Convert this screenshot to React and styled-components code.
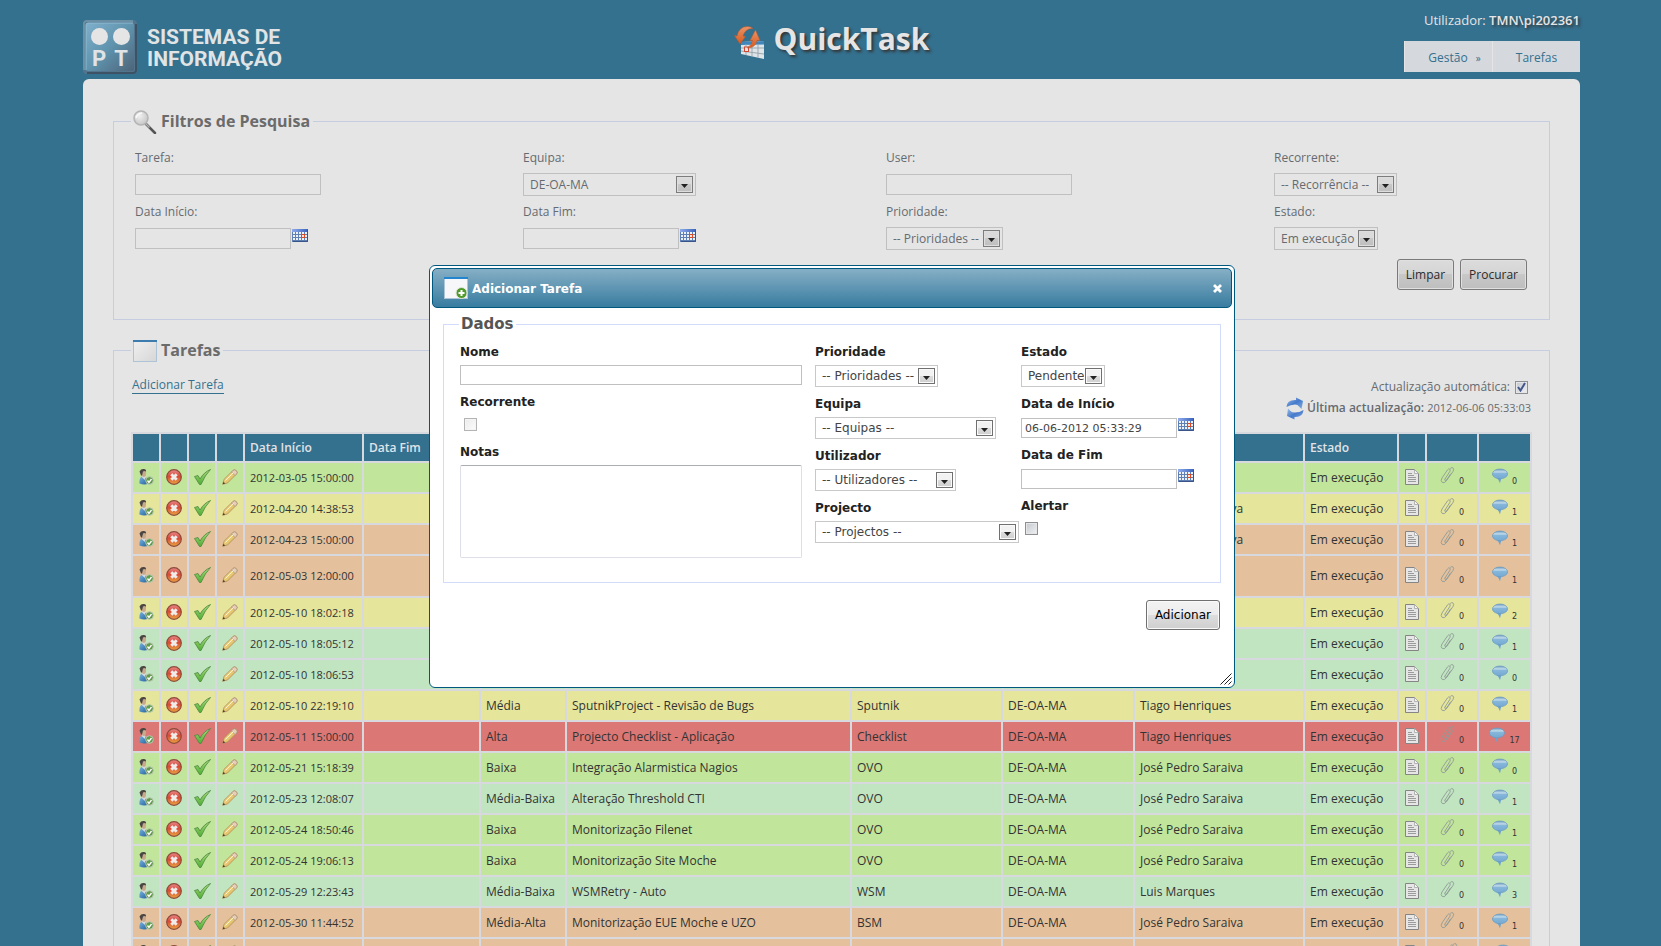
import React from "react";
import styled, { createGlobalStyle, css } from "styled-components";

const pageFont = `"Trebuchet MS", "Open Sans", "Noto Sans", sans-serif`;
const dialogFont = `Verdana, "DejaVu Sans", sans-serif`;

const GlobalStyle = createGlobalStyle`
  *, *::before, *::after { box-sizing: border-box; }
  body {
    margin: 0;
    background: #34718f;
    color: #666b70;
    font: 12px/18px ${pageFont};
  }
  button, input, select, textarea { font: inherit; color: inherit; margin: 0; }
`;

/* ---------- Page frame ---------- */

const Page = styled.div`
  height: 100vh;
  overflow: hidden;
  padding: 0 81px 0 83px;
`;

const Header = styled.header`
  display: grid;
  grid-template-columns: 1fr auto 1fr;
  height: 79px;
`;

const Brand = styled.div`
  display: flex;
  align-items: flex-start;
  gap: 10px;
  padding-top: 20px;
`;

const BrandName = styled.div`
  padding-top: 6px;
  color: #e0e4e5;
  font: bold 21px/22px Roboto, "Open Sans", sans-serif;
`;

const Title = styled.h1`
  display: flex;
  align-items: flex-start;
  gap: 10px;
  margin: 0;
  padding-top: 18px;
  color: #e5e5e5;
  font: bold 30px/42px ${pageFont};
  text-shadow: 2px 2px 3px #333;

  svg { margin-top: 8px; }
`;

const UserArea = styled.div`
  display: flex;
  flex-direction: column;
  align-items: flex-end;
  padding-top: 11px;
`;

const UserLine = styled.div`
  color: #e5e5e5;
  font-size: 13px;
  line-height: 18px;
  margin-bottom: 12px;

  strong { font-weight: 600; text-shadow: 2px 2px 3px #333; }
`;

const Menu = styled.nav`
  display: flex;
  height: 31px;
  background: #d5d8dd;
`;

const MenuItem = styled.a`
  display: flex;
  align-items: center;
  justify-content: center;
  gap: 8px;
  width: 88px;
  padding-top: 2px;
  padding-left: ${(p) => (p.$nested ? 12 : 0)}px;
  border-left: 1px solid #e5e5e5;
  color: #34718f;
  text-decoration: none;

  small { font-size: 10px; }
`;

const Panel = styled.main`
  min-height: 100vh;
  padding: 30px;
  background: #e5e5e5;
  border-radius: 6px 6px 0 0;
`;

const Group = styled.fieldset`
  min-width: 0;
  margin: 0 0 18px;
  padding: 0 17px;
  border: 1px solid #c6cde0;
`;

const GroupTitle = styled.legend`
  display: flex;
  align-items: center;
  gap: 4px;
  height: 25px;
  padding: 0 3px 0 2px;
  color: #6b6b6b;
  font-size: 16px;
  font-weight: bold;
  line-height: 20px;

  span { padding-bottom: 2px; }
`;

/* ---------- Form controls ---------- */

const Field = styled.div`
  display: flex;
  flex-direction: column;
  align-items: flex-start;
`;

const ControlRow = styled.div`
  display: flex;
  align-items: center;
  gap: 1px;
  height: 23px;
`;

const textBox = css`
  border: 1px solid #c0c0c0;
  border-radius: 0;
  background: transparent;
  outline: 0;
`;

const TextInput = styled.input`
  ${textBox}
  width: ${(p) => p.$width};
  height: ${(p) => (p.$dialog ? 20 : 21)}px;
  padding: 0 3px;
  font-size: ${(p) => (p.$dialog ? 11 : 12)}px;
`;

const SelectFrame = styled.div`
  position: relative;
  width: ${(p) => p.$width}px;
  height: ${(p) => (p.$dialog ? 22 : 23)}px;

  select {
    ${textBox}
    appearance: none;
    width: 100%;
    height: 100%;
    padding: 0 20px 0 6px;
    border-color: ${(p) => (p.$dialog ? "#c8c8c8" : "#c0c0c0")};
  }
`;

const SelectArrow = styled.span`
  position: absolute;
  top: 3px;
  right: 3px;
  bottom: 3px;
  display: flex;
  align-items: center;
  justify-content: center;
  width: 17px;
  padding-top: 2px;
  border: 1px solid ${(p) => (p.$dialog ? "#707070" : "#7c7c7c")};
  background: ${(p) =>
    p.$dialog
      ? "linear-gradient(#f2f2f2 50%, #dcdcdc 50%, #cfcfcf)"
      : "linear-gradient(#dadada 50%, #c8c8c8 50%, #bebebe)"};
  box-shadow: inset 0 0 0 1px ${(p) => (p.$dialog ? "#fafafa" : "#dedede")};
  pointer-events: none;
`;

const CalendarButton = styled.button`
  align-self: flex-start;
  width: 16px;
  height: 13px;
  margin-top: ${(p) => (p.$dialog ? 0 : 2)}px;
  padding: 0;
  border: 0;
  background: none;

  svg { display: block; }
`;

const CheckFrame = styled.span`
  position: relative;
  display: inline-flex;
  width: 13px;
  height: 13px;

  input {
    appearance: none;
    width: 13px;
    height: 13px;
    border: 1px solid ${(p) => (p.$faded ? "#b4b4b4" : "#8c8f93")};
    background: ${(p) =>
      p.$faded
        ? "linear-gradient(135deg, #ebebeb, #fcfcfc)"
        : "linear-gradient(135deg, #c3c8ce, #f0f1f3)"};
    box-shadow: inset 0 0 0 1px ${(p) => (p.$faded ? "#f4f4f4" : "#e6e6e6")};
  }
  svg {
    position: absolute;
    top: 1px;
    left: 2px;
    pointer-events: none;
  }
`;

const PushButton = styled.button`
  height: ${(p) => (p.$dialog ? 30 : 31)}px;
  padding: 0 8px;
  border: 1px solid ${(p) => (p.$dialog ? "#707070" : "#7a7a7a")};
  border-radius: 3px;
  background: ${(p) =>
    p.$dialog
      ? "linear-gradient(#f3f3f3, #ebebeb 50%, #dddddd 50%, #cfcfcf)"
      : "linear-gradient(#dcdcdc, #d4d4d4 50%, #c8c8c8 50%, #bebebe)"};
  box-shadow: inset 0 0 0 1px ${(p) => (p.$dialog ? "#fafafa" : "#e0e0e0")};
  color: ${(p) => (p.$dialog ? "#000" : "#2b2b2b")};
`;

/* ---------- Search filters ---------- */

const Filters = styled.div`
  display: grid;
  grid-template-columns: 388fr 363fr 388fr 254fr;
  row-gap: 7px;
  padding: 15px 4px 0;

  label { margin-bottom: 6px; }
`;

const FilterActions = styled.div`
  display: flex;
  justify-content: flex-end;
  gap: 6px;
  padding: 9px 5px 29px;
`;

/* ---------- Task list ---------- */

const ListBar = styled.div`
  display: flex;
  justify-content: space-between;
  padding: 14px 1px 13px;
`;

const AddLink = styled.a`
  align-self: flex-start;
  border-bottom: 1px solid #34718f;
  color: #34718f;
  line-height: 16px;
  text-decoration: none;
`;

const RefreshInfo = styled.div`
  display: flex;
  flex-direction: column;
  align-items: flex-end;
`;

const AutoRefresh = styled.label`
  display: flex;
  align-items: center;
  gap: 5px;
  height: 20px;
  padding-right: 3px;
`;

const LastRefresh = styled.div`
  display: flex;
  align-items: center;
  gap: 3px;
  height: 22px;

  strong { font-weight: 600; }
  time { font-size: 11px; }
`;

const IconButton = styled.button`
  display: inline-flex;
  padding: 0;
  border: 0;
  background: none;
  vertical-align: middle;
`;

const TaskTable = styled.table`
  width: 100%;
  table-layout: fixed;
  border-collapse: separate;
  border-spacing: 2px;
  background: #d8d9de;
  color: #333;

  th {
    height: 27px;
    padding: 0 5px;
    background: #34718f;
    color: #e0e4e8;
    font-weight: 600;
    text-align: left;
  }
  td { padding: 0 5px; }
`;

const rowColors = {
  green: "#c1e59b",
  yellow: "#e5e59b",
  orange: "#e4c19c",
  mint: "#c1e5c1",
  red: "#db7875",
};

const TaskRow = styled.tr`
  height: ${(p) => (p.$tall ? 40 : 29)}px;

  td { background: ${(p) => rowColors[p.$tone]}; }
`;

const IconCell = styled.td`
  && { padding: 0 0 3px; text-align: center; }
  svg { display: inline-block; vertical-align: middle; }
`;

const DateCell = styled.td`
  font-size: 11px;
`;

const Count = styled.sub`
  padding-left: 4px;
  font-size: 8px;
  line-height: 8px;
  vertical-align: -5px;
  font-family: "DejaVu Sans", sans-serif;
`;

/* ---------- Dialog ---------- */

const DialogLayer = styled.div`
  position: fixed;
  inset: 0;
  display: flex;
  align-items: flex-start;
  justify-content: center;
  padding: 265px 0 0 3px;
`;

const Dialog = styled.section`
  position: relative;
  width: 806px;
  max-width: 100%;
  padding: 2px;
  border: 1px solid #00587f;
  border-radius: 6px;
  background: #fff;
  color: #222;
  font: 12px/18px ${dialogFont};
`;

const DialogHeader = styled.div`
  display: flex;
  align-items: center;
  gap: 4px;
  height: 40px;
  padding: 0 9px 0 11px;
  border: 1px solid #00587f;
  border-radius: 5px;
  background: linear-gradient(#86afc5, #387ca0);
  color: #fff;

  h2 { flex: 1; margin: 0; font-size: 12px; padding-top: 2px; }
`;

const DialogBody = styled.form`
  padding: 5px 11px 55px;
`;

const DialogGroup = styled.fieldset`
  margin: 0;
  padding: 0 15px 24px;
  border: 1px solid #d0dcfa;
`;

const DialogGroupTitle = styled.legend`
  height: 23px;
  padding: 0 2px;
  color: #555;
  font-size: 15px;
  font-weight: bold;
  line-height: 23px;
`;

const DialogColumns = styled.div`
  display: grid;
  grid-template-columns: 355px 206px 1fr;
  padding: 7px 1px 0;
`;

const DialogColumn = styled.div`
  display: flex;
  flex-direction: column;
  gap: 8px;
`;

const DialogField = styled(Field)`
  > label { margin-bottom: 4px; font-weight: bold; }
  select, input { color: #444; }
`;

const DialogRow = styled.div`
  display: flex;
  align-items: center;
  gap: 1px;
  height: ${(p) => p.$height}px;
  padding: ${(p) => (p.$date ? "1px 0 0" : p.$check ? "0 0 2px 4px" : 0)};
`;

const Notes = styled.textarea`
  width: 342px;
  height: 93px;
  padding: 4px;
  border: 1px solid #dedfe6;
  border-top-color: #abadb3;
  border-radius: 2px;
  outline: 0;
  resize: none;
`;

const DialogActions = styled.div`
  display: flex;
  justify-content: flex-end;
  padding: 17px 1px 0;
`;

const ResizeGrip = styled.svg`
  position: absolute;
  right: 2px;
  bottom: 2px;
`;

/* ---------- Icons ---------- */

const HiddenSvg = styled.svg`
  position: absolute;
  width: 0;
  height: 0;
`;

const IconDefs = () => (
  <HiddenSvg aria-hidden="true">
    <defs>
      <linearGradient id="gLogo" x1="0" y1="0" x2="1" y2="1">
        <stop offset="0" stopColor="#7fb0cb" />
        <stop offset=".5" stopColor="#5f93ae" />
        <stop offset="1" stopColor="#4d6478" />
      </linearGradient>
      <linearGradient id="gRed" x1="0" y1="0" x2="0" y2="1">
        <stop offset="0" stopColor="#e8898a" />
        <stop offset=".45" stopColor="#d84836" />
        <stop offset="1" stopColor="#e8a441" />
      </linearGradient>
      <linearGradient id="gTick" x1="0" y1="0" x2="0" y2="1">
        <stop offset="0" stopColor="#a9dc7c" />
        <stop offset="1" stopColor="#4fae33" />
      </linearGradient>
      <linearGradient id="gPencil" x1="0" y1="0" x2="1" y2="1">
        <stop offset="0" stopColor="#f6e9a4" />
        <stop offset="1" stopColor="#d9a846" />
      </linearGradient>
      <linearGradient id="gBody" x1="0" y1="0" x2="1" y2="1">
        <stop offset="0" stopColor="#7bb4dd" />
        <stop offset="1" stopColor="#1f5f9c" />
      </linearGradient>
      <linearGradient id="gBubble" x1="0" y1="0" x2="0" y2="1">
        <stop offset="0" stopColor="#6f9dc2" />
        <stop offset=".3" stopColor="#c2dbea" />
        <stop offset=".45" stopColor="#86b6da" />
        <stop offset="1" stopColor="#74aad4" />
      </linearGradient>
      <linearGradient id="gPaper" x1="0" y1="0" x2="1" y2="1">
        <stop offset="0" stopColor="#f0f0f0" />
        <stop offset="1" stopColor="#d6d6d6" />
      </linearGradient>
      <linearGradient id="gCalHead" x1="0" y1="0" x2="1" y2="0">
        <stop offset="0" stopColor="#8fabec" />
        <stop offset="1" stopColor="#3a62bd" />
      </linearGradient>
      <linearGradient id="gSync" x1="0" y1="0" x2="1" y2="1">
        <stop offset="0" stopColor="#9cbfe8" />
        <stop offset=".5" stopColor="#4579cb" />
        <stop offset="1" stopColor="#84aee2" />
      </linearGradient>
      <linearGradient id="gOrange" x1="0" y1="0" x2="0" y2="1">
        <stop offset="0" stopColor="#eb9468" />
        <stop offset="1" stopColor="#d65a1e" />
      </linearGradient>
      <radialGradient id="gLens" cx=".4" cy=".35" r=".7">
        <stop offset="0" stopColor="#f0f0f0" />
        <stop offset="1" stopColor="#c4c4c4" />
      </radialGradient>
    </defs>
  </HiddenSvg>
);

const LogoIcon = () => (
  <svg width="54" height="54" viewBox="0 0 54 54" aria-hidden="true">
    <rect width="54" height="54" rx="4" fill="#52758d" />
    <path d="M1 50V4q0-3 3-3h46" fill="none" stroke="#6b8fa5" strokeWidth="2" />
    <path d="M53 4v46q0 3-3 3H4" fill="none" stroke="#3d5265" strokeWidth="2" />
    <rect x="3" y="3" width="48" height="48" rx="2" fill="url(#gLogo)" />
    <path d="M3 50V5q0-2 2-2h45" fill="none" stroke="#8fbbd1" />
    <circle cx="16.500" cy="16.500" r="8.500" fill="#e5e5e5" />
    <circle cx="38.500" cy="16.500" r="8.500" fill="#e5e5e5" />
    <g fill="#e0e3e5" fontFamily="Roboto, sans-serif" fontWeight="bold" fontSize="22" textAnchor="middle">
      <text x="16" y="46">P</text>
      <text x="38" y="46">T</text>
    </g>
  </svg>
);

const QuickTaskIcon = () => (
  <svg width="30" height="34" viewBox="0 0 30 34" aria-hidden="true">
    <path d="M7 16l23-1v18L7 28z" fill="#dfe4e7" />
    <path d="M7 16l23-1v3.500L7 19z" fill="#3f86bd" />
    <path d="M7 22h23M7 25l23 3M12 18v11M18 18v12.500M24 18v13.500" stroke="#93a2ac" strokeWidth=".9" fill="none" />
    <rect x="10.500" y="21" width="4" height="4.500" fill="#f3e6e2" stroke="#cf4a35" />
    <path d="M3 10Q5 .5 13.500.5q3.500 0 5.500 2-7.500-.5-10 7.500l2.500.5L6 18 .5 9.500z" fill="url(#gOrange)" stroke="#b9572c" strokeWidth=".5" />
    <path d="M21.500 4L26 14.500h-3Q21.500 22 13 22q5-3 5.500-7.500H16z" fill="url(#gOrange)" stroke="#b9572c" strokeWidth=".5" />
  </svg>
);

const SearchIcon = () => (
  <svg width="24" height="24" viewBox="0 0 24 24" aria-hidden="true">
    <path d="M13 14l9 9" stroke="#555" strokeWidth="2.500" strokeLinecap="round" />
    <path d="M12.500 13.500l4 4" stroke="#b5b5b5" strokeWidth="1.500" />
    <circle cx="8" cy="8" r="7" fill="url(#gLens)" stroke="#b4b4b4" strokeWidth="1.500" />
    <path d="M3 8q1-4 6-5" stroke="#fafafa" strokeWidth="1.500" fill="none" />
  </svg>
);

const WindowIcon = ({ add }) => (
  <svg width="24" height="22" viewBox="0 0 24 22" aria-hidden="true">
    <rect x=".5" y=".5" width="23" height="21" fill={add ? "#f7f7f9" : "url(#gPaper)"} stroke="#adc4d8" />
    <rect width="24" height="2" fill={add ? "#2485cf" : "#3c7cae"} />
    {add && (
      <g>
        <circle cx="17.500" cy="16" r="5.500" fill="#4f9a2b" stroke="#dfe8d8" />
        <path d="M17.500 13v6M14.500 16h6" stroke="#fff" strokeWidth="2" />
      </g>
    )}
  </svg>
);

const CalendarIcon = () => (
  <svg width="16" height="13" viewBox="0 0 16 13" aria-hidden="true">
    <rect width="16" height="13" fill="#5f80b5" />
    <rect width="16" height="3" fill="url(#gCalHead)" />
    <g fill="#edf1f8">
      {[3, 6, 9].map((y) => [1, 4, 7, 10, 13].map((x) => <rect key={`${x}-${y}`} x={x} y={y} width="2" height="2" />))}
    </g>
    <rect x="9.500" y="5.500" width="3" height="3" fill="#f6e6e0" stroke="#dd4b24" />
    <path d="M15.500 1v11.500H1" stroke="#3b5488" fill="none" />
  </svg>
);

const TickMark = () => (
  <svg width="9" height="10" viewBox="0 0 9 10" aria-hidden="true">
    <path d="M1 5l2.500 3.500L8 1" fill="none" stroke="#43568c" strokeWidth="2" />
  </svg>
);

const ArrowGlyph = () => (
  <svg width="7" height="5" viewBox="0 0 7 5" aria-hidden="true">
    <path d="M0 1h7L3.500 5z" fill="#222" />
  </svg>
);

const SyncIcon = () => (
  <svg width="18" height="23" viewBox="0 0 18 23" aria-hidden="true">
    <path d="M.5 10Q1 2.500 10 3V.5l7 3.500-1.500 8-2.500-2.500Q12 7.500 9 7.500 4.500 7.500.5 10z" fill="url(#gSync)" />
    <path d="M17.500 13q-.5 7.500-9 7v2.500L1 19l1-7.500L4.500 14q1.500 1.500 4.500 1.500 4.500 0 8.500-2.500z" fill="url(#gSync)" />
  </svg>
);

const UserIcon = () => (
  <svg width="16" height="16" viewBox="0 0 16 16" aria-hidden="true">
    <path d="M1.500 14.500q-.5-5.500 2.500-7l4 1.500q3 1.500 2.500 5.500-4 2-9 0z" fill="url(#gBody)" />
    <path d="M3.500 8l1.500-2 2.500 2-.5 3z" fill="#d5dadd" />
    <path d="M3 3Q3 .5 5.500.5 8.500.5 8 4.500q0 3.500-2.500 3.500Q3.500 7.500 3 3z" fill="#c9a98c" />
    <path d="M1.500 2.500Q3-.3 6 .1q2.500.4 2 2.400-2-.8-3 0L4 6.500H3z" fill="#4a4643" />
    <circle cx="11.500" cy="11.500" r="3.800" fill="#5f9c46" stroke="#b8c4b4" />
    <path d="M9.500 11.500l1.500 2 2.500-3.500" fill="none" stroke="#fff" strokeWidth="1.300" />
  </svg>
);

const CancelIcon = () => (
  <svg width="16" height="16" viewBox="0 0 16 16" aria-hidden="true">
    <circle cx="8" cy="8" r="7.300" fill="url(#gRed)" stroke="#8d4a3a" strokeWidth="1.200" />
    <path d="M5.300 5.300l5.400 5.400M10.700 5.300l-5.400 5.400" stroke="#f0ecea" strokeWidth="3" />
  </svg>
);

const DoneIcon = () => (
  <svg width="17" height="16" viewBox="0 0 17 16" aria-hidden="true">
    <path d="M.5 7.500l3.500-1 2 3.500Q10 3 16.500.500 11 6 7 15.500H5.500z" fill="url(#gTick)" stroke="#4b8540" strokeWidth=".8" strokeLinejoin="round" />
  </svg>
);

const PencilIcon = () => (
  <svg width="16" height="16" viewBox="0 0 16 16" aria-hidden="true">
    <path d="M.7 15.300l1.300-5L11 1.500q1.500-1.500 3.300.2 1.700 1.800.2 3.300L5.500 14z" fill="url(#gPencil)" stroke="#b08d58" strokeWidth=".8" />
    <path d="M11 1.500q1.500-1.500 3.300.2 1.700 1.800.2 3.300l-1.500 1.500-3.500-3.500z" fill="#e6cdb8" stroke="#a8907a" strokeWidth=".7" />
    <path d="M3.500 11.500l8-8" stroke="#fbf3c8" strokeWidth="1" />
    <path d="M.7 15.300l.8-2.500 1.700 1.700z" fill="#4a3d30" />
  </svg>
);

const DocumentIcon = () => (
  <svg width="14" height="16" viewBox="0 0 14 16" aria-hidden="true">
    <path d="M.5.500h9l4 4v11H.5z" fill="#e6e6e6" stroke="#858585" />
    <path d="M9.500.500v4h4z" fill="#f4f4f4" stroke="#a5a5a5" strokeWidth=".8" />
    <path d="M3 4.500h4M3 6.500h6M3 8.500h8M3 10.500h8M3 12.500h8" stroke="#9b9b9b" />
  </svg>
);

const ClipIcon = () => (
  <svg width="15" height="17" viewBox="0 0 15 17" fill="none" strokeLinecap="round" aria-hidden="true">
    <path
      d="M5 12L9.800 4.500q1-1.800-.1-2.500-1.200-.6-2.200.9L2 11q-1.800 3 .2 4.400 2 1.200 4-1.400L13 4.500q1.500-2.500-.2-3.700Q11.500.200 10.500 1.200M5 12q-.6 1.200.1 1.600.8.400 1.500-.6L10.500 7"
      stroke="#909b97"
      strokeWidth=".9"
    />
  </svg>
);

const CommentIcon = () => (
  <svg width="16" height="16" viewBox="0 0 16 16" aria-hidden="true">
    <path d="M4.500 9.500Q7 12 8 15.200 8.800 12 9.500 9.500z" fill="#6ea3cc" />
    <ellipse cx="8" cy="5.900" rx="7.600" ry="4.900" fill="url(#gBubble)" stroke="#6c9abf" strokeWidth=".7" />
  </svg>
);

const CloseIcon = () => (
  <svg width="9" height="9" viewBox="0 0 9 9" aria-hidden="true">
    <path d="M1 1l7 7M8 1L1 8" stroke="#fff" strokeWidth="2.800" />
  </svg>
);

/* ---------- Composed controls ---------- */

const Select = ({ id, text, width, dialog }) => (
  <SelectFrame $width={width} $dialog={dialog}>
    <select id={id}>
      <option>{text}</option>
    </select>
    <SelectArrow $dialog={dialog}>
      <ArrowGlyph />
    </SelectArrow>
  </SelectFrame>
);

const Calendar = ({ dialog, label }) => (
  <CalendarButton type="button" aria-label={label} $dialog={dialog}>
    <CalendarIcon />
  </CalendarButton>
);

const FilterField = ({ id, label, children }) => (
  <Field>
    <label htmlFor={id}>{label}</label>
    <ControlRow>{children}</ControlRow>
  </Field>
);

const columns = [
  { width: 26 },
  { width: 26 },
  { width: 26 },
  { width: 26 },
  { width: 117, title: "Data Início" },
  { width: 115, title: "Data Fim" },
  { width: 84 },
  {},
  { width: 149 },
  { width: 130 },
  { width: 168 },
  { width: 92, title: "Estado" },
  { width: 26 },
  { width: 50 },
  { width: 51 },
];

const jps = "José Pedro Saraiva";
const team = "DE-OA-MA";

const tasks = [
  { tone: "green", date: "2012-03-05 15:00:00", comments: 0 },
  { tone: "yellow", date: "2012-04-20 14:38:53", user: jps, comments: 1 },
  { tone: "orange", date: "2012-04-23 15:00:00", user: jps, comments: 1 },
  { tone: "orange", date: "2012-05-03 12:00:00", comments: 1, tall: true },
  { tone: "yellow", date: "2012-05-10 18:02:18", comments: 2 },
  { tone: "mint", date: "2012-05-10 18:05:12", comments: 1 },
  { tone: "mint", date: "2012-05-10 18:06:53", comments: 0 },
  { tone: "yellow", date: "2012-05-10 22:19:10", priority: "Média", name: "SputnikProject - Revisão de Bugs", project: "Sputnik", team, user: "Tiago Henriques", comments: 1 },
  { tone: "red", date: "2012-05-11 15:00:00", priority: "Alta", name: "Projecto Checklist - Aplicação", project: "Checklist", team, user: "Tiago Henriques", comments: 17 },
  { tone: "green", date: "2012-05-21 15:18:39", priority: "Baixa", name: "Integração Alarmistica Nagios", project: "OVO", team, user: jps, comments: 0 },
  { tone: "mint", date: "2012-05-23 12:08:07", priority: "Média-Baixa", name: "Alteração Threshold CTI", project: "OVO", team, user: jps, comments: 1 },
  { tone: "green", date: "2012-05-24 18:50:46", priority: "Baixa", name: "Monitorização Filenet", project: "OVO", team, user: jps, comments: 1 },
  { tone: "green", date: "2012-05-24 19:06:13", priority: "Baixa", name: "Monitorização Site Moche", project: "OVO", team, user: jps, comments: 1 },
  { tone: "mint", date: "2012-05-29 12:23:43", priority: "Média-Baixa", name: "WSMRetry - Auto", project: "WSM", team, user: "Luis Marques", comments: 3 },
  { tone: "orange", date: "2012-05-30 11:44:52", priority: "Média-Alta", name: "Monitorização EUE Moche e UZO", project: "BSM", team, user: jps, comments: 1 },
  { tone: "orange" },
];

const rowActions = [
  ["Atribuir", UserIcon],
  ["Cancelar", CancelIcon],
  ["Concluir", DoneIcon],
  ["Editar", PencilIcon],
];

const Task = ({ task }) => (
  <TaskRow $tone={task.tone} $tall={task.tall}>
    {rowActions.map(([label, Icon]) => (
      <IconCell key={label}>
        <IconButton type="button" aria-label={label}>
          <Icon />
        </IconButton>
      </IconCell>
    ))}
    <DateCell>{task.date}</DateCell>
    <td />
    <td>{task.priority}</td>
    <td>{task.name}</td>
    <td>{task.project}</td>
    <td>{task.team}</td>
    <td>{task.user}</td>
    <td>{task.date && "Em execução"}</td>
    <IconCell>
      <DocumentIcon />
    </IconCell>
    <IconCell>
      <ClipIcon />
      <Count>{task.date && 0}</Count>
    </IconCell>
    <IconCell>
      <CommentIcon />
      <Count>{task.comments}</Count>
    </IconCell>
  </TaskRow>
);

const DialogSelect = ({ id, label, text, width }) => (
  <DialogField>
    <label htmlFor={id}>{label}</label>
    <Select id={id} text={text} width={width} dialog />
  </DialogField>
);

const DialogDate = ({ id, label, value }) => (
  <DialogField>
    <label htmlFor={id}>{label}</label>
    <DialogRow $height={21} $date>
      <TextInput id={id} $width="156px" $dialog defaultValue={value} />
      <Calendar dialog label={label} />
    </DialogRow>
  </DialogField>
);

const AddTaskDialog = () => (
  <DialogLayer>
    <Dialog role="dialog" aria-labelledby="dialog-title">
      <DialogHeader>
        <WindowIcon add />
        <h2 id="dialog-title">Adicionar Tarefa</h2>
        <IconButton type="button" aria-label="Fechar">
          <CloseIcon />
        </IconButton>
      </DialogHeader>
      <DialogBody>
        <DialogGroup>
          <DialogGroupTitle>Dados</DialogGroupTitle>
          <DialogColumns>
            <DialogColumn>
              <DialogField>
                <label htmlFor="t-name">Nome</label>
                <TextInput id="t-name" $width="342px" $dialog />
              </DialogField>
              <DialogField>
                <label htmlFor="t-rec">Recorrente</label>
                <DialogRow $height={20} $check>
                  <CheckFrame $faded>
                    <input type="checkbox" id="t-rec" />
                  </CheckFrame>
                </DialogRow>
              </DialogField>
              <DialogField>
                <label htmlFor="t-notes">Notas</label>
                <Notes id="t-notes" />
              </DialogField>
            </DialogColumn>
            <DialogColumn>
              <DialogSelect id="t-prio" label="Prioridade" text="-- Prioridades --" width={123} />
              <DialogSelect id="t-team" label="Equipa" text="-- Equipas --" width={181} />
              <DialogSelect id="t-user" label="Utilizador" text="-- Utilizadores --" width={141} />
              <DialogSelect id="t-proj" label="Projecto" text="-- Projectos --" width={204} />
            </DialogColumn>
            <DialogColumn>
              <DialogSelect id="t-state" label="Estado" text="Pendente" width={84} />
              <DialogDate id="t-start" label="Data de Início" value="06-06-2012 05:33:29" />
              <DialogDate id="t-end" label="Data de Fim" />
              <DialogField>
                <label htmlFor="t-alert">Alertar</label>
                <DialogRow $height={20} $check>
                  <CheckFrame>
                    <input type="checkbox" id="t-alert" />
                  </CheckFrame>
                </DialogRow>
              </DialogField>
            </DialogColumn>
          </DialogColumns>
        </DialogGroup>
        <DialogActions>
          <PushButton type="button" $dialog>
            Adicionar
          </PushButton>
        </DialogActions>
      </DialogBody>
      <ResizeGrip width="12" height="12" viewBox="0 0 12 12" aria-hidden="true">
        <path d="M.5 11.500l11-11M4.500 11.500l7-7M8.500 11.500l3-3" stroke="#222" strokeWidth="1" />
      </ResizeGrip>
    </Dialog>
  </DialogLayer>
);

export default function App() {
  return (
    <>
      <GlobalStyle />
      <IconDefs />
      <Page>
        <Header>
          <Brand>
            <LogoIcon />
            <BrandName>
              SISTEMAS DE
              <br />
              INFORMAÇÃO
            </BrandName>
          </Brand>
          <Title>
            <QuickTaskIcon />
            QuickTask
          </Title>
          <UserArea>
            <UserLine>
              Utilizador: <strong>TMN\pi202361</strong>
            </UserLine>
            <Menu>
              <MenuItem href="#gestao" $nested>
                Gestão <small>»</small>
              </MenuItem>
              <MenuItem href="#tarefas">Tarefas</MenuItem>
            </Menu>
          </UserArea>
        </Header>

        <Panel>
          <Group>
            <GroupTitle>
              <SearchIcon />
              <span>Filtros de Pesquisa</span>
            </GroupTitle>
            <Filters>
              <FilterField id="f-task" label="Tarefa:">
                <TextInput id="f-task" $width="186px" />
              </FilterField>
              <FilterField id="f-team" label="Equipa:">
                <Select id="f-team" text="DE-OA-MA" width={173} />
              </FilterField>
              <FilterField id="f-user" label="User:">
                <TextInput id="f-user" $width="186px" />
              </FilterField>
              <FilterField id="f-rec" label="Recorrente:">
                <Select id="f-rec" text="-- Recorrência --" width={123} />
              </FilterField>
              <FilterField id="f-start" label="Data Início:">
                <TextInput id="f-start" $width="156px" />
                <Calendar label="Data Início" />
              </FilterField>
              <FilterField id="f-end" label="Data Fim:">
                <TextInput id="f-end" $width="156px" />
                <Calendar label="Data Fim" />
              </FilterField>
              <FilterField id="f-prio" label="Prioridade:">
                <Select id="f-prio" text="-- Prioridades --" width={117} />
              </FilterField>
              <FilterField id="f-state" label="Estado:">
                <Select id="f-state" text="Em execução" width={104} />
              </FilterField>
            </Filters>
            <FilterActions>
              <PushButton type="button">Limpar</PushButton>
              <PushButton type="button">Procurar</PushButton>
            </FilterActions>
          </Group>

          <Group>
            <GroupTitle>
              <WindowIcon />
              <span>Tarefas</span>
            </GroupTitle>
            <ListBar>
              <AddLink href="#adicionar">Adicionar Tarefa</AddLink>
              <RefreshInfo>
                <AutoRefresh>
                  Actualização automática:
                  <CheckFrame>
                    <input type="checkbox" defaultChecked />
                    <TickMark />
                  </CheckFrame>
                </AutoRefresh>
                <LastRefresh>
                  <IconButton type="button" aria-label="Actualizar">
                    <SyncIcon />
                  </IconButton>
                  <span>
                    <strong>Última actualização:</strong> <time>2012-06-06 05:33:03</time>
                  </span>
                </LastRefresh>
              </RefreshInfo>
            </ListBar>
            <TaskTable>
              <colgroup>
                {columns.map((c, i) => (
                  <col key={i} width={c.width} />
                ))}
              </colgroup>
              <thead>
                <tr>
                  {columns.map((c, i) => (
                    <th key={i} scope="col">
                      {c.title}
                    </th>
                  ))}
                </tr>
              </thead>
              <tbody>
                {tasks.map((task, i) => (
                  <Task key={i} task={task} />
                ))}
              </tbody>
            </TaskTable>
          </Group>
        </Panel>
      </Page>
      <AddTaskDialog />
    </>
  );
}
